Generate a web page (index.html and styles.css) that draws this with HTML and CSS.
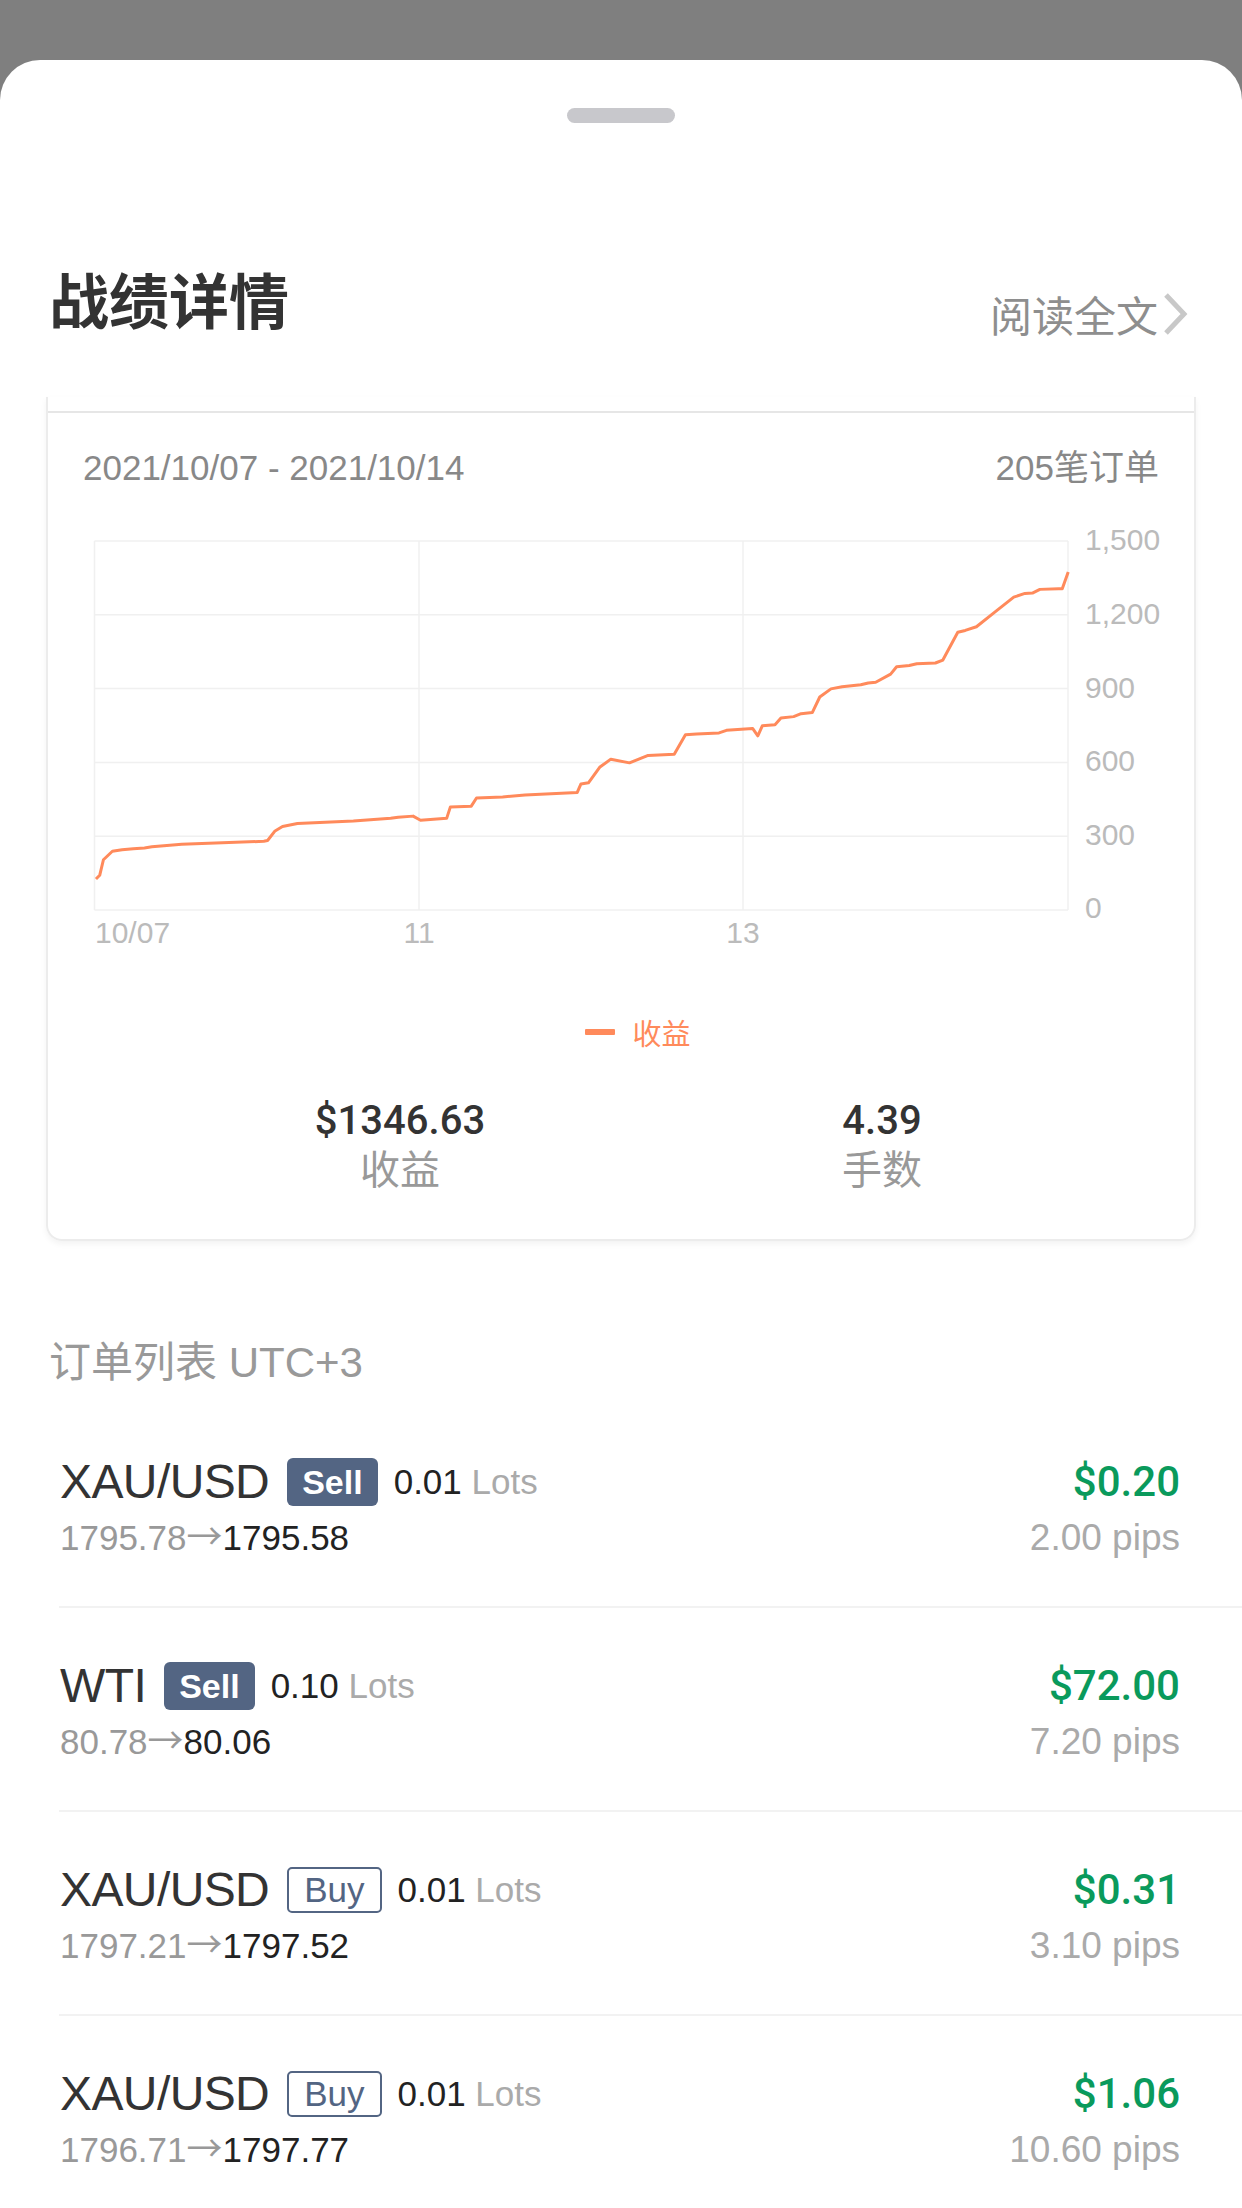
FILE: index.html
```html
<!DOCTYPE html>
<html lang="zh-CN">
<head>
<meta charset="utf-8">
<title>战绩详情</title>
<link rel="stylesheet" href="styles.css">
</head>
<body>
<div class="sheet">
  <div class="grabber"></div>
  <header class="head">
    <h1 class="title">战绩详情</h1>
    <a class="more">阅读全文<svg class="chev" width="25" height="44" viewBox="0 0 25 44"><polyline points="3,3 21,22 3,41" fill="none" stroke="#c8c8c8" stroke-width="5"/></svg></a>
  </header>
  <div class="scroll">
    <section class="card">
      <div class="card-tabs"></div>
      <div class="card-meta"><span>2021/10/07 - 2021/10/14</span><span>205笔订单</span></div>
      <svg class="chart" width="1146" height="480" viewBox="48 488 1146 480">
        <g stroke="#f0f0f0" stroke-width="1.5">
          <line x1="94.5" y1="541" x2="1068" y2="541"/>
          <line x1="94.5" y1="614.8" x2="1068" y2="614.8"/>
          <line x1="94.5" y1="688.6" x2="1068" y2="688.6"/>
          <line x1="94.5" y1="762.4" x2="1068" y2="762.4"/>
          <line x1="94.5" y1="836.2" x2="1068" y2="836.2"/>
          <line x1="94.5" y1="910" x2="1068" y2="910"/>
          <line x1="94.5" y1="541" x2="94.5" y2="910"/>
          <line x1="419" y1="541" x2="419" y2="910"/>
          <line x1="743" y1="541" x2="743" y2="910"/>
          <line x1="1068" y1="541" x2="1068" y2="910"/>
        </g>
        <g class="axis-y">
          <text x="1085" y="550">1,500</text>
          <text x="1085" y="623.8">1,200</text>
          <text x="1085" y="697.6">900</text>
          <text x="1085" y="771.4">600</text>
          <text x="1085" y="845.2">300</text>
          <text x="1085" y="918">0</text>
        </g>
        <g class="axis-x">
          <text x="95" y="943">10/07</text>
          <text x="419" y="943" text-anchor="middle">11</text>
          <text x="743" y="943" text-anchor="middle">13</text>
        </g>
        <g transform="translate(40 390) scale(0.74617 0.36990)">
          <polyline class="profit-line" vector-effect="non-scaling-stroke" fill="none" stroke="#ff8a5b" stroke-width="3" stroke-linejoin="round"
            points="75,1322 80,1312 85,1270 97,1247 110,1243 125,1240 140,1238 150,1235 190,1228 300,1220 305,1218 315,1192 325,1180 345,1172 420,1165 470,1158 480,1155 500,1152 510,1163 545,1158 550,1127 578,1125 585,1103 620,1100 650,1095 720,1088 725,1065 735,1062 750,1020 765,998 790,1008 815,988 850,985 865,932 880,930 910,927 920,920 955,915 962,935 968,908 985,905 993,887 1010,883 1020,875 1035,872 1045,830 1060,808 1075,802 1100,797 1110,792 1120,790 1140,768 1148,748 1165,745 1175,740 1200,738 1210,730 1230,655 1240,650 1255,640 1280,600 1305,560 1320,550 1330,549 1340,539 1365,537 1370,537 1378,492"/>
        </g>
      </svg>
      <div class="legend"><i class="legend-mark"></i>收益</div>
      <div class="stats">
        <div class="stat"><div class="stat-value">$1346.63</div><div class="stat-label">收益</div></div>
        <div class="stat"><div class="stat-value">4.39</div><div class="stat-label">手数</div></div>
      </div>
    </section>

    <h2 class="list-title">订单列表 UTC+3</h2>
    <ul class="orders">
      <li class="order">
        <div class="order-main">
          <div class="line1"><span class="sym">XAU/USD</span><span class="badge sell">Sell</span><span class="lots">0.01 <span class="unit">Lots</span></span></div>
          <div class="line2">1795.78<span class="arrow">→</span><span class="to">1795.58</span></div>
        </div>
        <div class="order-side">
          <div class="pnl">$0.20</div>
          <div class="pips">2.00 pips</div>
        </div>
      </li>
      <li class="order">
        <div class="order-main">
          <div class="line1"><span class="sym">WTI</span><span class="badge sell">Sell</span><span class="lots">0.10 <span class="unit">Lots</span></span></div>
          <div class="line2">80.78<span class="arrow">→</span><span class="to">80.06</span></div>
        </div>
        <div class="order-side">
          <div class="pnl">$72.00</div>
          <div class="pips">7.20 pips</div>
        </div>
      </li>
      <li class="order">
        <div class="order-main">
          <div class="line1"><span class="sym">XAU/USD</span><span class="badge buy">Buy</span><span class="lots">0.01 <span class="unit">Lots</span></span></div>
          <div class="line2">1797.21<span class="arrow">→</span><span class="to">1797.52</span></div>
        </div>
        <div class="order-side">
          <div class="pnl">$0.31</div>
          <div class="pips">3.10 pips</div>
        </div>
      </li>
      <li class="order">
        <div class="order-main">
          <div class="line1"><span class="sym">XAU/USD</span><span class="badge buy">Buy</span><span class="lots">0.01 <span class="unit">Lots</span></span></div>
          <div class="line2">1796.71<span class="arrow">→</span><span class="to">1797.77</span></div>
        </div>
        <div class="order-side">
          <div class="pnl">$1.06</div>
          <div class="pips">10.60 pips</div>
        </div>
      </li>
    </ul>
  </div>
</div>
</body>
</html>
```

FILE: styles.css
```css
html, body {
  margin: 0;
  padding: 0;
  height: 2208px;
  overflow: hidden;
}
body {
  background: #7f7f7f;
  font-family: "Liberation Sans", "Noto Sans CJK SC", sans-serif;
}
.sheet {
  margin-top: 60px;
  height: 2148px;
  background: #fff;
  border-radius: 40px 40px 0 0;
  overflow: hidden;
}
.grabber {
  width: 108px;
  height: 15px;
  margin: 48px auto 0;
  border-radius: 8px;
  background: #c8c8cc;
}
.head {
  margin: 145px 0 61px;
  padding: 0 54px 0 49px;
  height: 68px;
  display: flex;
  justify-content: space-between;
  align-items: flex-start;
}
.title {
  margin: 0;
  font: 700 60px/60px "Noto Sans CJK SC", sans-serif;
  color: #333;
}
.more {
  margin-top: 24px;
  display: flex;
  align-items: center;
  gap: 5px;
  font: 400 42px/42px "Noto Sans CJK SC", sans-serif;
  color: #8e8e8e;
}
.chev { display: block; }

.card {
  margin: 0 46px;
  border: 2px solid #ececec;
  border-top: 0;
  border-radius: 0 0 16px 16px;
  box-shadow: 0 3px 6px rgba(0, 0, 0, 0.05);
}
.card-tabs {
  height: 14px;
  border-bottom: 2px solid #e6e6e6;
}
.card-meta {
  display: flex;
  justify-content: space-between;
  padding: 34px 35px 0;
  font-size: 35px;
  line-height: 41px;
  color: #888;
}
.chart { display: block; }
.axis-y text, .axis-x text {
  font-family: "Liberation Sans", sans-serif;
  font-size: 30px;
  fill: #bbb;
}
.legend {
  margin-top: 46px;
  padding-left: 34px;
  height: 36px;
  display: flex;
  justify-content: center;
  align-items: center;
  gap: 17px;
  font: 400 29px/36px "Noto Sans CJK SC", sans-serif;
  color: #ff8a5b;
}
.legend-mark {
  display: block;
  width: 30px;
  height: 6px;
  border-radius: 1px;
  background: #ff8a5b;
}
.stats {
  display: grid;
  grid-template-columns: 482px 482px;
  padding: 47px 0 47px 111px;
}
.stat { text-align: center; }
.stat-value {
  font: 500 40px/48px Roboto, sans-serif;
  color: #333;
}
.stat-label {
  margin-top: 3px;
  font: 400 40px/44px "Liberation Sans", "Noto Sans CJK SC", sans-serif;
  color: #999;
}

.list-title {
  margin: 97px 0 0;
  padding-left: 49px;
  font-weight: 400;
  font-size: 42px;
  line-height: 50px;
  color: #999;
}
.orders {
  list-style: none;
  margin: 16px 0 0;
  padding: 0;
}
.order {
  box-sizing: border-box;
  height: 204px;
  margin-left: 59px;
  padding: 54px 62px 0 1px;
  border-bottom: 2px solid #f2f2f2;
  display: flex;
  justify-content: space-between;
}
.line1 {
  display: flex;
  align-items: center;
  height: 48px;
}
.sym {
  font-size: 48px;
  line-height: 48px;
  letter-spacing: -0.6px;
  color: #333;
}
.badge {
  box-sizing: border-box;
  margin-left: 18px;
  height: 48px;
  padding: 0 15px;
  border-radius: 6px;
  font-size: 34px;
  font-weight: 700;
  line-height: 48px;
  color: #fff;
  background: #536583;
}
.badge.buy {
  height: 46px;
  line-height: 42px;
  font-size: 35px;
  font-weight: 400;
  color: #536583;
  background: transparent;
  border: 2px solid #536583;
  border-radius: 5px;
}
.lots {
  margin-left: 16px;
  font-size: 35px;
  color: #222;
}
.unit { color: #aaa; }
.line2 {
  margin-top: 10px;
  height: 44px;
  font-size: 35px;
  line-height: 44px;
  color: #999;
}
.arrow {
  font-family: "Noto Sans CJK SC", sans-serif;
  font-size: 36px;
  line-height: 0;
}
.to { color: #222; }
.order-side { text-align: right; }
.pnl {
  font: 500 42px/48px Roboto, sans-serif;
  color: #0a9a5c;
}
.pips {
  margin-top: 10px;
  font-size: 37px;
  line-height: 44px;
  color: #aaa;
}
```
